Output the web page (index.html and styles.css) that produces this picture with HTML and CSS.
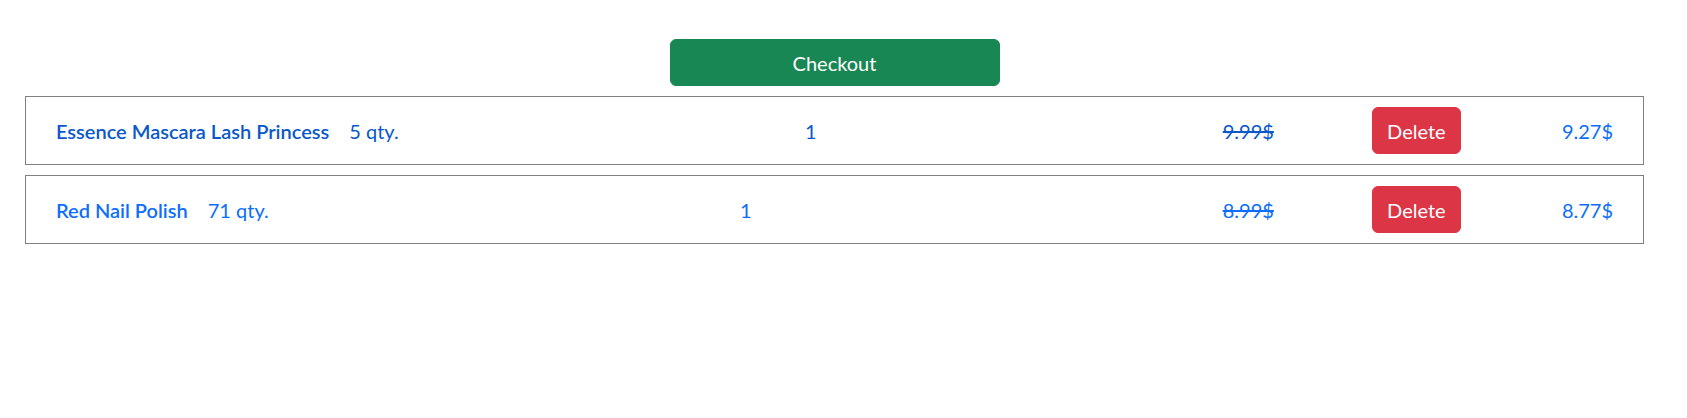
FILE: index.html
```html
<!DOCTYPE html>
<html lang="en">
<head>
<meta charset="utf-8">
<title>Cart</title>
<link rel="stylesheet" href="styles.css">
</head>
<body>
<div class="page">
  <div class="checkout-wrap">
    <button class="btn btn-success checkout">Checkout</button>
  </div>
  <div class="cart-item hovered">
    <div class="item-info">
      <span class="item-name">Essence Mascara Lash Princess</span>
      <span class="item-stock">5 qty.</span>
    </div>
    <span class="item-count">1</span>
    <div class="item-prices">
      <span class="old-price">9.99$</span>
      <button class="btn btn-danger delete">Delete</button>
      <span class="new-price">9.27$</span>
    </div>
  </div>
  <div class="cart-item">
    <div class="item-info">
      <span class="item-name">Red Nail Polish</span>
      <span class="item-stock">71 qty.</span>
    </div>
    <span class="item-count">1</span>
    <div class="item-prices">
      <span class="old-price">8.99$</span>
      <button class="btn btn-danger delete">Delete</button>
      <span class="new-price">8.77$</span>
    </div>
  </div>
</div>
</body>
</html>
```

FILE: styles.css
```css
body {
  margin: 0;
  background: #fff;
  font-family: "Lato", "Open Sans", sans-serif;
  font-size: 20px;
  color: #0d6efd;
}

.page {
  padding: 39px 43px 0 25px;
}

.checkout-wrap {
  display: flex;
  justify-content: center;
  margin-bottom: 10px;
}

.btn {
  font-family: inherit;
  font-size: 20px;
  line-height: 30px;
  height: 47px;
  padding: 0 16px;
  border: 1px solid transparent;
  border-radius: 6px;
  color: #fff;
  cursor: pointer;
}

.btn-success {
  background: #198754;
  border-color: #198754;
}

.checkout {
  width: 330px;
}

.btn-danger {
  background: #dc3545;
  border-color: #dc3545;
}

.delete {
  width: 89px;
  padding: 0;
}

.cart-item {
  display: flex;
  align-items: center;
  justify-content: space-between;
  border: 1px solid #808080;
  padding: 10px 30px;
  margin-bottom: 10px;
  color: #0d6efd;
}

.item-info {
  display: flex;
  align-items: baseline;
  gap: 20px;
}

.item-name {
  font-weight: 600;
}

.item-prices {
  display: flex;
  align-items: center;
  gap: 98px;
}

.old-price {
  text-decoration: line-through;
}

.new-price {
  margin-left: 3px;
}

.hovered .item-info,
.hovered .item-count,
.hovered .old-price {
  color: #0a58ca;
}
```
